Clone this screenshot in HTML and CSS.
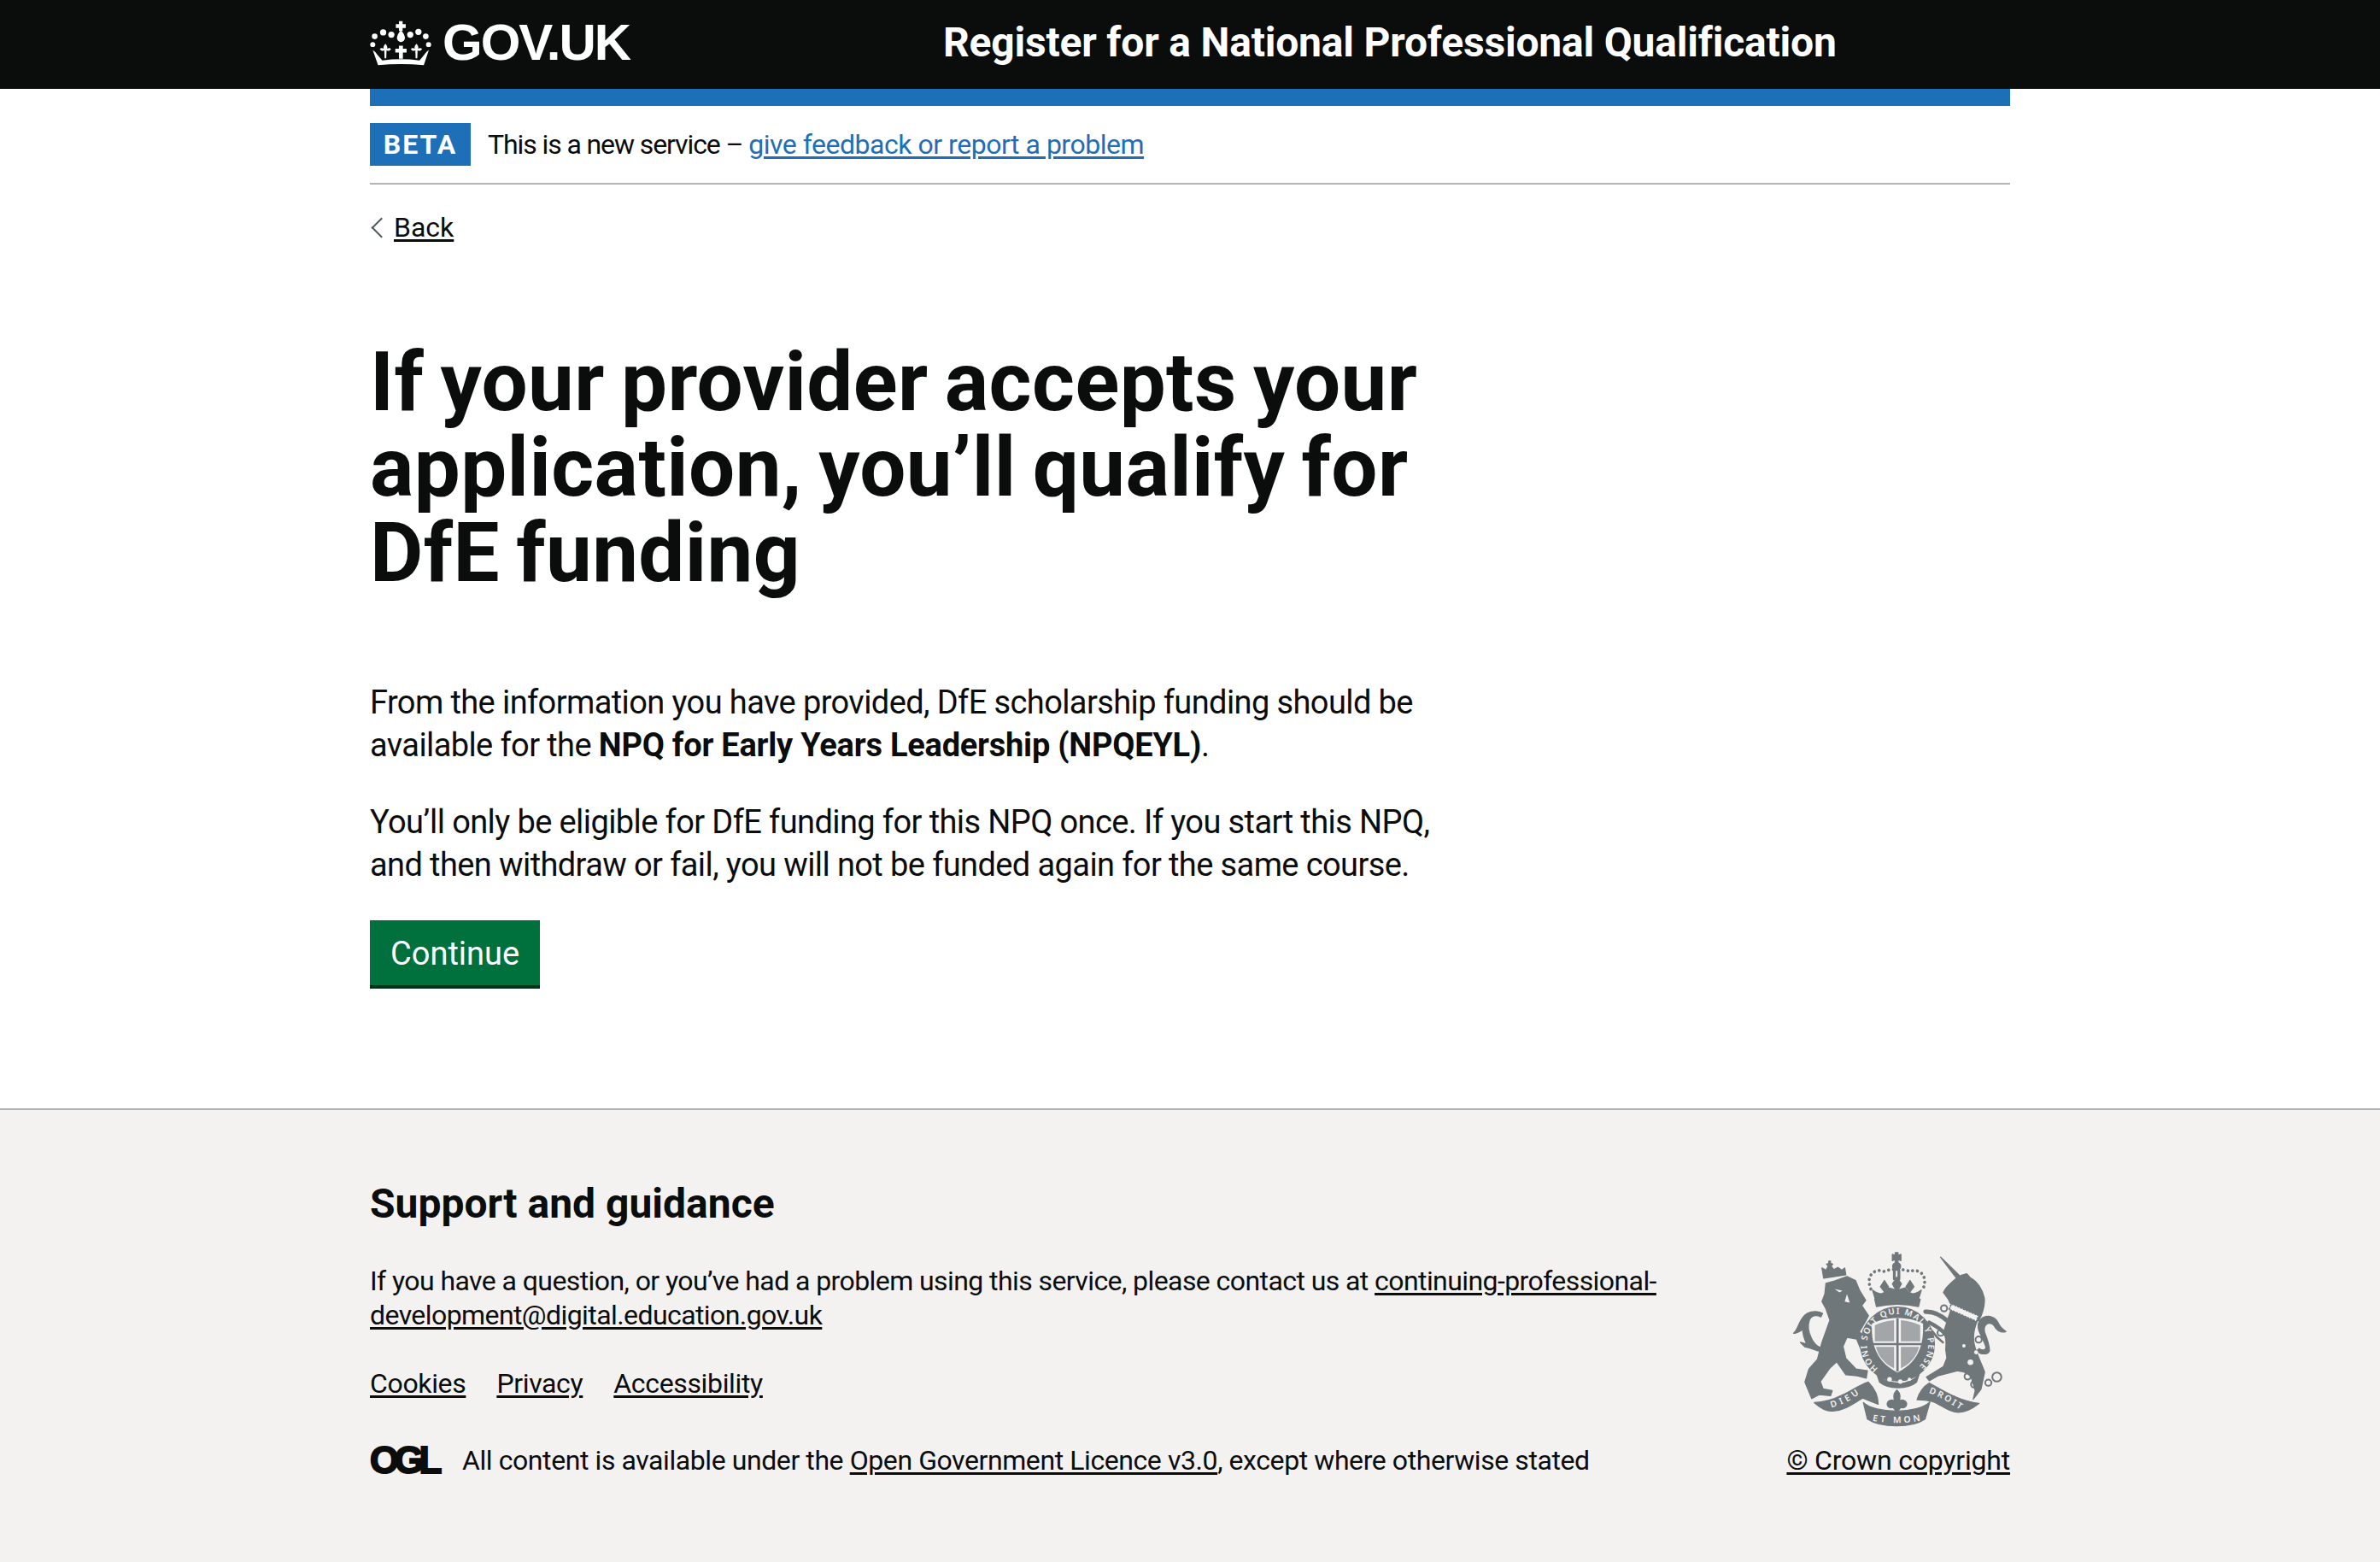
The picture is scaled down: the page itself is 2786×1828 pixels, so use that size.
FILE: index.html
```html
<!DOCTYPE html>
<html lang="en">

<head>
    <meta charset="UTF-8">
    <title>Register for a National Professional Qualification</title>
    <link rel="stylesheet" href="styles.css">
</head>

<body>
    <header class="site-header">
        <div class="width-container header-inner">
            <a class="logo" href="#">
                <svg class="crown" viewBox="38 68 218 160" aria-hidden="true">
                    <g fill="#fff">
                        <circle cx="55" cy="124" r="10"/><circle cx="85" cy="110" r="11"/><circle cx="114" cy="118" r="11"/>
                        <circle cx="181" cy="118" r="11"/><circle cx="210" cy="108" r="11"/><circle cx="236" cy="124" r="10"/>
                        <circle cx="48" cy="153" r="9"/><circle cx="246" cy="153" r="9"/>
                        <path d="M141 70h13v11h11v13h-11v11h-13V94h-11V81h11z"/>
                        <path d="M148 102c9 10 14 20 14 28a14 14 0 0 1-28 0c0-8 5-18 14-28z"/>
                        <path d="M48 172c8 6 12 10 15 15l19 22c44-6 88-6 132 0l18-22c3-5 8-10 15-15l-18 54c-54-5-108-5-162 0z"/>
                        <path d="M141 157h14v11h13v13h-13v22h-14v-22h-13v-13h13z"/>
                        <path d="M93 150c6 6 8 12 6 18 5-4 11-3 14 1-3 5-10 8-16 5l-1 28h-6l-1-28c-6 3-13 0-16-5 3-4 9-5 14-1-2-6 0-12 6-18z"/>
                        <path d="M203 150c6 6 8 12 6 18 5-4 11-3 14 1-3 5-10 8-16 5l-1 28h-6l-1-28c-6 3-13 0-16-5 3-4 9-5 14-1-2-6 0-12 6-18z"/>
                    </g>
                </svg>
                <span class="logo-text">GOV.UK</span>
            </a>
            <a class="service-name" href="#">Register for a National Professional Qualification</a>
        </div>
    </header>

    <div class="width-container">
        <div class="blue-bar"></div>
        <div class="phase-banner">
            <strong class="tag">BETA</strong>
            <span class="phase-text">This is a new service – <a class="link-blue" href="#">give feedback or report a problem</a></span>
        </div>
        <a class="back-link" href="#">Back</a>

        <main class="main-column">
            <h1>If your provider accepts your application, you’ll qualify for DfE funding</h1>
            <p>From the information you have provided, DfE scholarship funding should be available for the <strong>NPQ for Early Years Leadership (NPQEYL)</strong>.</p>
            <p>You’ll only be eligible for DfE funding for this NPQ once. If you start this NPQ, and then withdraw or fail, you will not be funded again for the same course.</p>
            <a class="button" href="#">Continue</a>
        </main>
    </div>

    <footer class="site-footer">
        <div class="width-container footer-inner">
            <div class="footer-meta">
                <h2>Support and guidance</h2>
                <p class="contact">If you have a question, or you’ve had a problem using this service, please contact us at <a href="#">continuing-professional-development@digital.education.gov.uk</a></p>
                <ul class="footer-links">
                    <li><a href="#">Cookies</a></li>
                    <li><a href="#">Privacy</a></li>
                    <li><a href="#">Accessibility</a></li>
                </ul>
                <div class="licence">
                    <span class="ogl">OGL</span>
                    <span>All content is available under the <a href="#">Open Government Licence v3.0</a>, except where otherwise stated</span>
                </div>
            </div>
            <div class="copyright">
                <svg class="arms" viewBox="105 38 760 620" aria-hidden="true">
                    <g class="arms-shapes">
                        <!-- lion -->
                        <path d="M226 152l30-8 44-16 30 14 14 34 22 36-14 18 24 36-12 22-20 34 42 52-6 24-28-6-18-44-34-6-14 32 10 42 36 38 40 6-4 26-32-8-40-4-32-46-24 22-34 48 10 26 32 6-6 18-40-4-26 14-24-58 14-46 30-34 16-60 28-78-14-40-14-26 10-26z"/>
                        <path d="M218 134l-6-36 14 8 8-14-6-8 8-2v-8h6v8l8 2-6 8 10 12 14-8 14 10 10-8 4 24z"/>
                        <path d="M112 328c18-14 18-52 48-70 20-10 42-8 54 0l-6 12c-18-8-32-4-40 10-8 24-4 44 6 64 8 18 20 30 36 36l-4 12c-20-4-36-14-54-16l-16-16 22 6c-8-18-14-36-14-52-10 8-22 14-32 14z"/>
                        <!-- unicorn -->
                        <path d="M630 60l74 72-12 10z"/>
                        <path d="M640 184c8-20 30-36 48-52 12-8 24-12 34-14l12 14c24 12 44 42 50 72 2 30-8 58-20 80l-64-28-16-24-20-10-8-16z"/>
                        <path d="M668 240l92 42c-12 28-18 53-12 83 7 35 27 70 37 100l-13 60-27 35 7-30-12-40c-5-20-25-28-50-30l-70 18-30 17-10-13 60-37 12-30-4-30c2-20 2-45-8-60z"/>
                        <path d="M770 280c20-20 50-14 62 10 6 14 14 22 28 32-14 4-28-2-36-12-6-12-16-20-30-16-10 6-12 20-8 34 8 20 16 42 16 62-6 14-30 14-46 0l10-8c12 8 20 6 24-2-2-18-18-40-26-64-4-14-2-26 6-36z"/>
                        <!-- crown -->
                        <path d="M470 44h10v10l10-4v22l-10-4v10h-10V68l-10 4V50l10 4z"/>
                        <circle cx="475" cy="92" r="14"/>
                        <path d="M390 176c26 20 42 16 56-8l30 8 30-8c14 24 30 28 56 8l-10 32c-50-10-102-10-152 0z"/>
                        <path d="M398 208c50-12 108-12 160 0l-6 26c-46-10-102-10-148 0z"/>
                        <path d="M432 142l14 22-14 18-14-18zM476 130l16 24-16 28-16-28zM522 142l14 22-14 18-14-18z"/>
                        <path d="M464 106h6v32h-6zM480 106h6v32h-6z"/>
                        <!-- garter -->
                        <circle cx="478" cy="366" r="130"/>
                        <path d="M405 470c30 40 115 50 150 0l-10 30c-30 26-100 26-130 0z"/>
                        <!-- ribbons -->
                        <path d="M185 572c40 0 70-12 100-27 35-17 60-35 90-45 20 20 35 45 35 78l-55-22c-35 22-65 44-105 46-25 2-45-12-65-30z"/>
                        <path d="M547 562c8-27 23-47 43-59 50 27 100 62 175 72-25 20-55 35-85 30-30-5-55-30-80-37-20-5-35-6-53-6z"/>
                        <path d="M358 572c42 40 192 40 234-2l-17 60c-45 32-155 32-203 0z"/>
                        <!-- fleur -->
                        <path d="M476 528c12 12 14 26 6 40 8-8 24-6 28 6 2 12-10 20-20 14l-14 18-14-18c-10 6-22-2-20-14 4-12 20-14 28-6-8-14-6-28 6-40z"/>
                    </g>
                    <g fill="#f3f2f1">
                        <path d="M478 274c34 0 64 6 90 20 2 60-6 130-90 172-84-42-92-112-90-172 26-14 56-20 90-20z"/>
                        <circle cx="735" cy="430" r="10"/><circle cx="755" cy="395" r="7"/><circle cx="712" cy="372" r="6"/>
                        <path d="M256 172l28 6-10 6zM300 190l10 30-18-4z"/>
                        <circle cx="450" cy="490" r="8"/><circle cx="488" cy="498" r="8"/><circle cx="520" cy="490" r="6"/>
                    </g>
                    <g fill="#6f777b">
                        <path d="M474 276h8v186h-8zM390 362h176v8H390z"/>
                        <path d="M398 300c20-10 44-16 68-18v74h-68zM490 282c24 2 48 8 68 18v56h-68zM402 376h64v76c-32-16-56-42-64-76zM490 376h64c-8 34-32 60-64 76z" opacity=".62"/>
                    </g>
                    <g fill="none" stroke="#6f777b" stroke-width="6">
                        <circle cx="642" cy="240" r="11"/><circle cx="630" cy="326" r="11"/><circle cx="764" cy="350" r="11"/>
                        <circle cx="725" cy="480" r="11"/><circle cx="748" cy="508" r="11"/><circle cx="798" cy="502" r="11"/><circle cx="828" cy="482" r="16"/>
                    </g>
                    <g fill="none" stroke="#6f777b" stroke-linecap="round">
                        <path d="M655 285c-25-22-50-35-78-33" stroke-width="16"/>
                        <path d="M650 335c-15-20-40-35-60-45" stroke-width="14"/>
                        <path d="M600 320c10 15 25 30 38 40" stroke-width="8"/>
                        <path d="M384 172c-20-50 16-74 46-62 28-10 64-10 92 0 30-12 66 12 46 62" stroke-width="11" stroke-dasharray="0.1 17"/>
                    </g>
                    <path d="M668 224l96 42-8 20-96-42z" fill="#f3f2f1" stroke="#6f777b" stroke-width="5" stroke-dasharray="8 3"/>
                    <defs>
                        <path id="garter-ring" d="M410 452a108 108 0 1 1 136 0"/>
                        <path id="rib-left" d="M245 590c40-10 75-30 107-55"/>
                        <path id="rib-right" d="M588 538c37 12 77 37 112 60"/>
                        <path id="rib-mid" d="M390 636c50 10 120 10 170 0"/>
                    </defs>
                    <g class="arms-text">
                        <text class="garter-text"><textPath href="#garter-ring" textLength="520">HONI SOIT QUI MAL Y PENSE</textPath></text>
                        <text><textPath href="#rib-left" textLength="110">DIEU</textPath></text>
                        <text><textPath href="#rib-right" textLength="125">DROIT</textPath></text>
                        <text><textPath href="#rib-mid" textLength="170">ET MON</textPath></text>
                    </g>
                </svg>
                <a href="#">© Crown copyright</a>
            </div>
        </div>
    </footer>
</body>

</html>
```
FILE: styles.css
```css
* {
    box-sizing: border-box;
}

body {
    margin: 0;
    font-family: Roboto, Arial, sans-serif;
    font-size: 38px;
    line-height: 50px;
    color: #0b0c0c;
    background: #fff;
}

a {
    color: inherit;
    text-decoration-thickness: 3px;
    text-underline-offset: 3px;
}

.width-container {
    width: 1920px;
    margin-left: 433px;
}

.site-header {
    height: 104px;
    background: #0b0c0c;
    color: #fff;
}

.header-inner {
    display: flex;
    align-items: center;
    height: 100px;
}

.logo {
    display: flex;
    align-items: center;
    gap: 13px;
    width: 671px;
    color: #fff;
    text-decoration: none;
}

.crown {
    width: 72px;
    height: 53px;
}

.logo-text {
    font-family: "Liberation Sans", Arial, sans-serif;
    font-size: 60px;
    line-height: 60px;
    font-weight: 700;
    letter-spacing: -2px;
}

.service-name {
    font-size: 48px;
    font-weight: 700;
    letter-spacing: -0.2px;
    color: #fff;
    text-decoration: none;
}

.blue-bar {
    height: 20px;
    background: #1d70b8;
}

.phase-banner {
    display: flex;
    align-items: center;
    gap: 20px;
    height: 92px;
    border-bottom: 2px solid #b1b4b6;
    font-size: 32px;
}

.phase-text {
    letter-spacing: -1.1px;
}

.tag {
    width: 118px;
    height: 50px;
    background: #1d70b8;
    color: #fff;
    font-size: 32px;
    line-height: 50px;
    letter-spacing: 2px;
    text-align: center;
}

.link-blue {
    color: #1d70b8;
    letter-spacing: -0.48px;
}

.back-link {
    display: inline-block;
    position: relative;
    margin-top: 30px;
    padding-left: 28px;
    font-size: 32px;
    line-height: 40px;
}

.back-link::before {
    content: "";
    position: absolute;
    left: 5px;
    top: 12px;
    width: 15px;
    height: 15px;
    border-left: 2px solid #505a5f;
    border-bottom: 2px solid #505a5f;
    transform: rotate(45deg);
}

.main-column {
    width: 1270px;
    padding-top: 108px;
}

h1 {
    margin: 0 0 100px;
    font-size: 96px;
    line-height: 100px;
    font-weight: 700;
    letter-spacing: 0.4px;
    word-spacing: -5px;
}

.main-column p {
    margin: 0 0 40px;
    letter-spacing: -0.6px;
}

.main-column strong {
    letter-spacing: -0.23px;
}

.button {
    display: inline-block;
    height: 80px;
    padding: 0 24px;
    border-bottom: 4px solid #002d18;
    background: #00703c;
    color: #fff;
    font-size: 38px;
    line-height: 78px;
    text-decoration: none;
}

.site-footer {
    margin-top: 140px;
    height: 532px;
    border-top: 2px solid #b1b4b6;
    background: #f3f2f1;
    font-size: 32px;
    line-height: 40px;
}

.footer-inner {
    display: flex;
    justify-content: space-between;
    align-items: flex-end;
    padding-top: 80px;
}

.footer-meta {
    width: 1520px;
}

h2 {
    margin: 0 0 40px;
    font-size: 48px;
    line-height: 60px;
    font-weight: 700;
}

.contact {
    margin: 0 0 40px;
    letter-spacing: -0.58px;
}

.footer-links {
    display: flex;
    gap: 36px;
    margin: 0 0 50px;
    padding: 0;
    list-style: none;
    letter-spacing: -0.35px;
}

.licence {
    display: flex;
    align-items: center;
    gap: 26px;
    letter-spacing: -0.42px;
}

.ogl {
    width: 82px;
    font-family: "Liberation Sans", Arial, sans-serif;
    font-size: 44px;
    line-height: 40px;
    font-weight: 700;
    letter-spacing: -5.5px;
    -webkit-text-stroke: 2px #0b0c0c;
}

.copyright {
    display: flex;
    flex-direction: column;
    align-items: flex-end;
    gap: 19px;
    letter-spacing: -0.2px;
}

.arms {
    width: 253px;
    height: 206px;
    margin-right: 3px;
}

.arms-shapes {
    fill: #6f777b;
    stroke: #6f777b;
    stroke-width: 4px;
    stroke-linejoin: round;
}

.arms-text {
    fill: #f3f2f1;
    font-family: "Noto Sans", Arial, sans-serif;
    font-size: 31px;
    font-weight: 600;
    letter-spacing: 0;
}

.garter-text {
    font-size: 30px;
}
```
